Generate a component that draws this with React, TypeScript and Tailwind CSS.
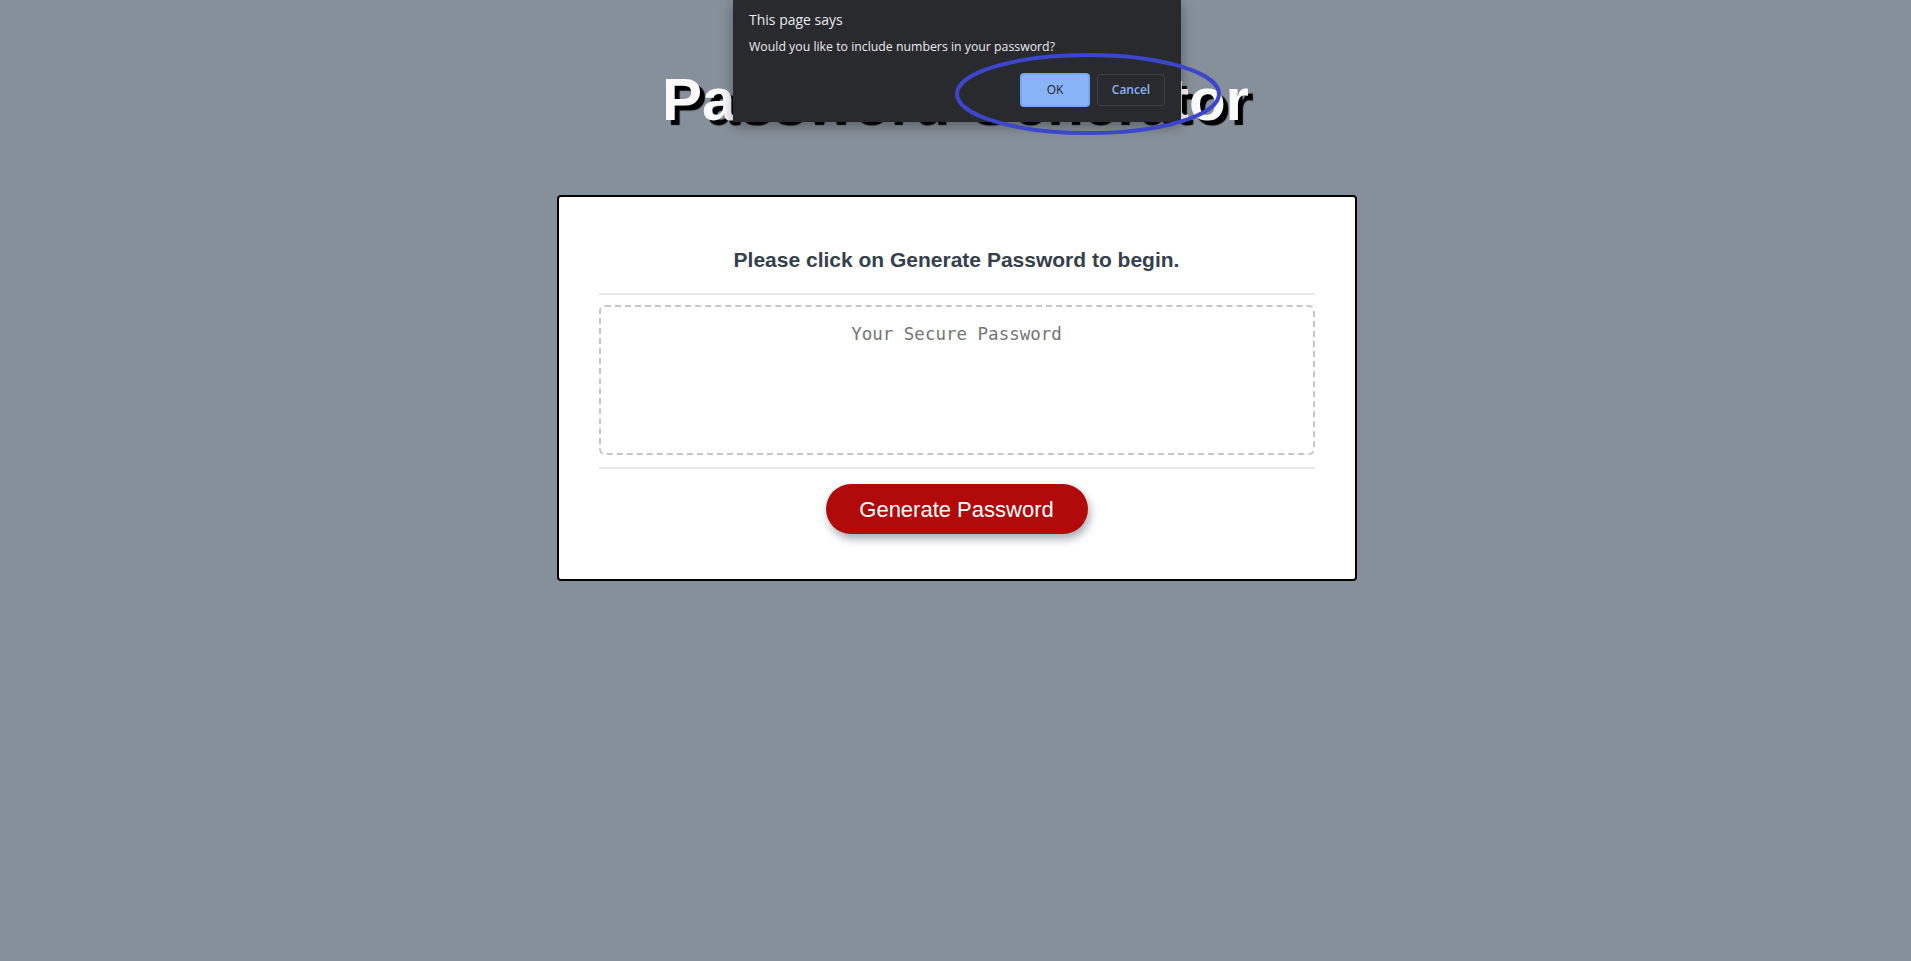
import { FC } from "react";

const ConfirmDialog: FC = () => {
  return (
    <div className="absolute left-[733px] top-0 h-[122px] w-[448px] bg-[#292a2d] px-4 pt-[10px] text-[#e8eaed] [font-family:'Open_Sans',sans-serif] shadow-[0_4px_12px_rgba(0,0,0,0.35)]">
      <div className="text-[14px] leading-[20px]">This page says</div>
      <div className="mt-[8px] text-[12.3px] leading-[18px]">Would you like to include numbers in your password?</div>
      <div className="mt-[17px] flex justify-end gap-[7px]">
        <button className="h-[34px] w-[70px] rounded-[4px] border-2 border-[#78a6f2] bg-[#8ab4f8] text-[12px] font-medium text-[#202124]">
          OK
        </button>
        <button className="mt-[1px] h-[32px] w-[68px] rounded-[4px] border border-[#3c4043] bg-[#292a2d] text-[12px] font-semibold text-[#8ab4f8]">
          Cancel
        </button>
      </div>
    </div>
  );
};

const Annotation: FC = () => (
  <svg className="pointer-events-none absolute left-0 top-0" width="1911" height="961">
    <ellipse cx="1088" cy="94" rx="131" ry="39" fill="none" stroke="#3c46cc" strokeWidth="4" />
  </svg>
);

export default function App() {
  return (
    <div className="relative min-h-[961px] w-full overflow-hidden bg-[#86909a] [font-family:'Liberation_Sans',Arial,sans-serif]">
      <h1 className="mt-[65px] text-center text-[60px] font-bold leading-[69px] text-[#fafafa] [text-shadow:5px_5px_1px_#000]">
        Password Generator
      </h1>

      <div className="mx-auto mt-[61px] w-[800px] translate-x-[1px] rounded-[4px] border-2 border-black bg-white px-[40px] pb-[45px] pt-[51px]">
        <h2 className="text-center text-[21px] font-bold leading-[24px] text-[#35404b]">
          Please click on Generate Password to begin.
        </h2>
        <hr className="mt-[21px] border-t-2 border-[#e8e8e8]" />
        <div className="mt-[10px] h-[150px] rounded-[6px] border-2 border-dashed border-[#c3c6ca] pt-[16px] text-center">
          <span className="text-[17.5px] leading-[21px] text-[#757575] [font-family:'DejaVu_Sans_Mono',monospace]">
            Your Secure Password
          </span>
        </div>
        <hr className="mt-[12px] border-t-2 border-[#e8e8e8]" />
        <div className="mt-[15px] flex justify-center">
          <button className="h-[50px] w-[262px] rounded-full bg-[#b00a0a] text-[22px] text-white shadow-[2px_5px_8px_rgba(60,70,90,0.45)]">
            Generate Password
          </button>
        </div>
      </div>

      <ConfirmDialog />
      <Annotation />
    </div>
  );
}
